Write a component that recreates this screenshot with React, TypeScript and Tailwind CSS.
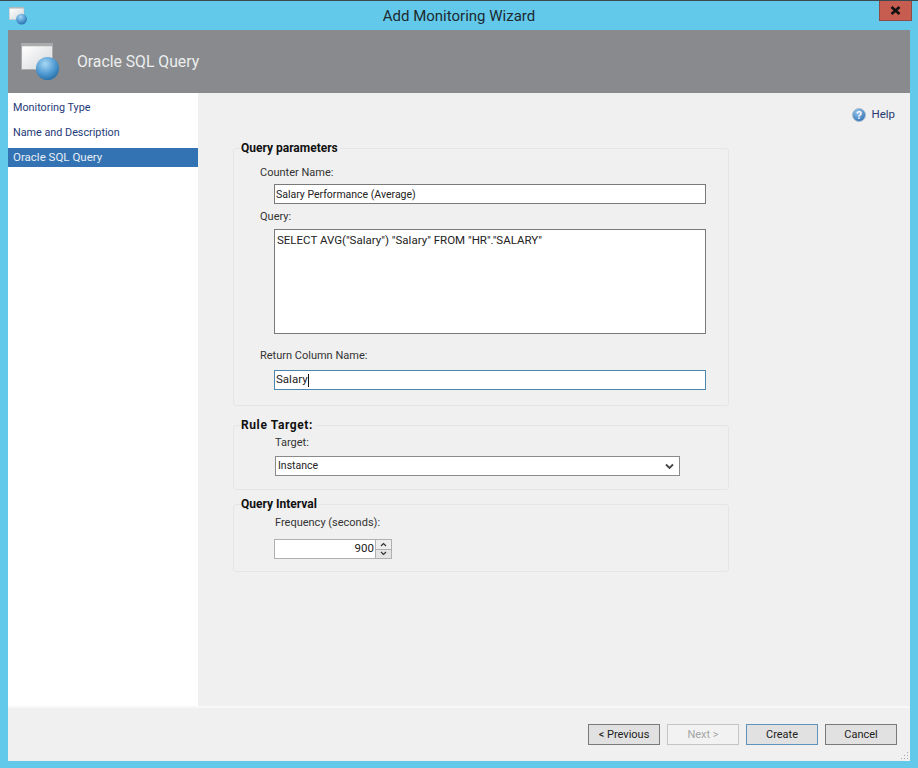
const font = { fontFamily: 'Roboto, "Open Sans", sans-serif' };

function WindowGlobeIcon({ size }: { size: number }) {
  const id = `globe${size}`;
  return (
    <svg width={size} height={size} viewBox="0 0 38 38">
      <defs>
        <linearGradient id={`${id}w`} x1="0" y1="0" x2="1" y2="1">
          <stop offset="0" stopColor="#ffffff" />
          <stop offset="1" stopColor="#d4d6d8" />
        </linearGradient>
        <radialGradient id={`${id}g`} cx="0.4" cy="0.3" r="0.8">
          <stop offset="0" stopColor="#a8d8f4" />
          <stop offset="0.55" stopColor="#4f9ad2" />
          <stop offset="1" stopColor="#1f659f" />
        </radialGradient>
      </defs>
      <rect x="0.5" y="0.5" width="31" height="26" fill="#eeeeee" stroke="#a9abad" />
      <rect x="1" y="1" width="30" height="2.5" fill="#a9abad" />
      <rect x="1.5" y="3.5" width="29" height="22.5" fill={`url(#${id}w)`} />
      <circle cx="26.5" cy="25.5" r="11.5" fill={`url(#${id}g)`} />
    </svg>
  );
}

function Field({ className, children }: { className: string; children: React.ReactNode }) {
  return <div className={`bg-white border flex text-[#222] ${className}`}>{children}</div>;
}

function GroupBox({ title, titleClass, className, children }: { title: string; titleClass?: string; className: string; children: React.ReactNode }) {
  return (
    <fieldset className={`w-[496px] border border-[#e3e6e9] rounded-[3px] ${className}`}>
      <legend className={`ml-[7px] pr-[2px] text-[12px] leading-[14px] font-bold text-[#111] ${titleClass ?? ''}`}>{title}</legend>
      {children}
    </fieldset>
  );
}

function Label({ children, className }: { children: React.ReactNode; className: string }) {
  return <div className={`text-[11px] leading-[14px] text-[#333] ${className}`}>{children}</div>;
}

function WizardButton({ children, className }: { children: React.ReactNode; className: string }) {
  return (
    <button type="button" className={`w-[72px] h-[21px] border text-[11px] leading-none ${className}`}>
      {children}
    </button>
  );
}

export default function App() {
  return (
    <div style={font} className="w-[918px] h-[768px] flex flex-col bg-[#63c9ea] border-t border-[#3a4a50] overflow-hidden">
      <div className="h-[29px] shrink-0 grid grid-cols-[1fr_auto_1fr] items-start">
        <div className="pl-[9px] pt-[6px]">
          <WindowGlobeIcon size={18} />
        </div>
        <div className="pt-[5px] text-[15px] leading-[20px] text-[#1c2a30]">Add Monitoring Wizard</div>
        <div className="flex justify-end pr-[6px]">
          <div className="w-[33px] h-[20px] bg-[#c75c50] border border-[#8e4a44] border-t-0 flex items-center justify-center">
            <svg width="11" height="9" viewBox="0 0 11 9">
              <path d="M1.5 1 L9.5 8 M9.5 1 L1.5 8" stroke="#111" strokeWidth="2.6" />
            </svg>
          </div>
        </div>
      </div>

      <div className="flex-1 mx-2 mb-[7px] flex flex-col min-h-0 bg-[#f0f0f0]">
        <div className="h-[63px] shrink-0 bg-[#888a8d] flex items-center pl-[13px]">
          <WindowGlobeIcon size={38} />
          <span className="ml-[18px] text-[15.75px] text-[#eceeee]">Oracle SQL Query</span>
        </div>

        <div className="flex-1 flex min-h-0">
          <div className="w-[190px] shrink-0 bg-white pt-[3px] text-[10.8px] text-[#1e3a78]">
            <div className="h-[25px] pl-[5px] flex items-center">Monitoring Type</div>
            <div className="h-[25px] pl-[5px] flex items-center">Name and Description</div>
            <div className="mt-[2px] h-[19px] pl-[5px] flex items-center bg-[#3373b3] text-[11.5px] text-[#e8eef5]">Oracle SQL Query</div>
          </div>

          <div className="flex-1 pl-[35px] pt-[13px]">
            <div className="w-[662px] h-[18px] flex items-center justify-end gap-[5px] text-[11.5px] text-[#2a3a70]">
              <svg width="14" height="14" viewBox="0 0 14 14">
                <defs>
                  <radialGradient id="help" cx="0.4" cy="0.3" r="0.8">
                    <stop offset="0" stopColor="#9cc8ec" />
                    <stop offset="1" stopColor="#2468b0" />
                  </radialGradient>
                </defs>
                <circle cx="7" cy="7" r="6.5" fill="url(#help)" stroke="#a9bfd2" />
                <text x="7" y="10.5" textAnchor="middle" fontSize="10" fontWeight="700" fill="#fff" fontFamily="Liberation Sans">?</text>
              </svg>
              Help
            </div>

            <GroupBox title="Query parameters" className="mt-[17px] h-[265px]">
              <div className="pl-[26px]">
                <Label className="mt-[11px] text-[10.8px]">Counter Name:</Label>
                <Field className="ml-[14px] mt-[4px] w-[432px] h-[20px] border-[#7a7a7a] items-center pl-[1px] pt-px text-[10.5px]">Salary Performance (Average)</Field>
                <Label className="mt-[6px]">Query:</Label>
                <Field className="ml-[14px] mt-[5px] w-[432px] h-[105px] border-[#7a7a7a] pl-[2px] pt-[2px] text-[11.5px]">
                  SELECT AVG(&quot;Salary&quot;) &quot;Salary&quot; FROM &quot;HR&quot;.&quot;SALARY&quot;
                </Field>
                <Label className="mt-[15px]">Return Column Name:</Label>
                <Field className="ml-[14px] mt-[7px] w-[432px] h-[20px] border-[#4a86b0] items-center pl-[1px] text-[11.5px]">
                  Salary
                  <span className="w-px h-[13px] bg-[#111]" />
                </Field>
              </div>
            </GroupBox>

            <GroupBox title="Rule Target:" titleClass="tracking-[0.6px]" className="mt-[12px] h-[72px]">
              <div className="pl-[41px]">
                <Label className="mt-[4px]">Target:</Label>
                <Field className="mt-[6px] w-[405px] h-[20px] border-[#8a8a8a] items-center justify-between pl-[2px] pr-[5px] text-[10.5px]">
                  Instance
                  <svg width="9" height="7" viewBox="0 0 9 7">
                    <path d="M1 1.5 L4.5 5 L8 1.5" fill="none" stroke="#444" strokeWidth="1.8" />
                  </svg>
                </Field>
              </div>
            </GroupBox>

            <GroupBox title="Query Interval" className="mt-[7px] h-[75px]">
              <div className="pl-[41px]">
                <Label className="mt-[5px]">Frequency (seconds):</Label>
                <Field className="mt-[9px] -ml-px w-[118px] h-[20px] border-[#b0b0b0] items-center text-[11.5px]">
                  <span className="flex-1 text-right pr-[1px]">900</span>
                  <div className="w-[16px] h-full flex flex-col border-l border-[#b0b0b0]">
                    <div className="flex-1 bg-[#eeeeee] border-b border-[#b0b0b0] flex items-center justify-center">
                      <svg width="7" height="5" viewBox="0 0 7 5">
                        <path d="M1 4 L3.5 1.5 L6 4" fill="none" stroke="#333" strokeWidth="1.2" />
                      </svg>
                    </div>
                    <div className="flex-1 bg-[#e4e4e4] flex items-center justify-center">
                      <svg width="7" height="5" viewBox="0 0 7 5">
                        <path d="M1 1 L3.5 3.5 L6 1" fill="none" stroke="#333" strokeWidth="1.2" />
                      </svg>
                    </div>
                  </div>
                </Field>
              </div>
            </GroupBox>
          </div>
        </div>

        <div className="h-[55px] shrink-0 border-t-2 border-[#f8f8f8] relative flex justify-end items-start gap-[7px] pt-[16px] pr-[13px]">
          <WizardButton className="border-[#7a7a7a] bg-[#e1e1e1] text-[#222]">&lt; Previous</WizardButton>
          <WizardButton className="border-[#c4c4c4] bg-[#f2f2f2] text-[#a5a5a5]">Next &gt;</WizardButton>
          <WizardButton className="border-[#5f93bd] bg-[#e1e1e1] text-[#222]">Create</WizardButton>
          <WizardButton className="border-[#7a7a7a] bg-[#e1e1e1] text-[#222]">Cancel</WizardButton>
          <svg className="absolute right-[1px] bottom-[1px]" width="9" height="9" viewBox="0 0 9 9">
            <path d="M7 1h1v1H7zM4 4h1v1H4zM7 4h1v1H7zM1 7h1v1H1zM4 7h1v1H4zM7 7h1v1H7z" fill="#a8a8a8" />
          </svg>
        </div>
      </div>
    </div>
  );
}
